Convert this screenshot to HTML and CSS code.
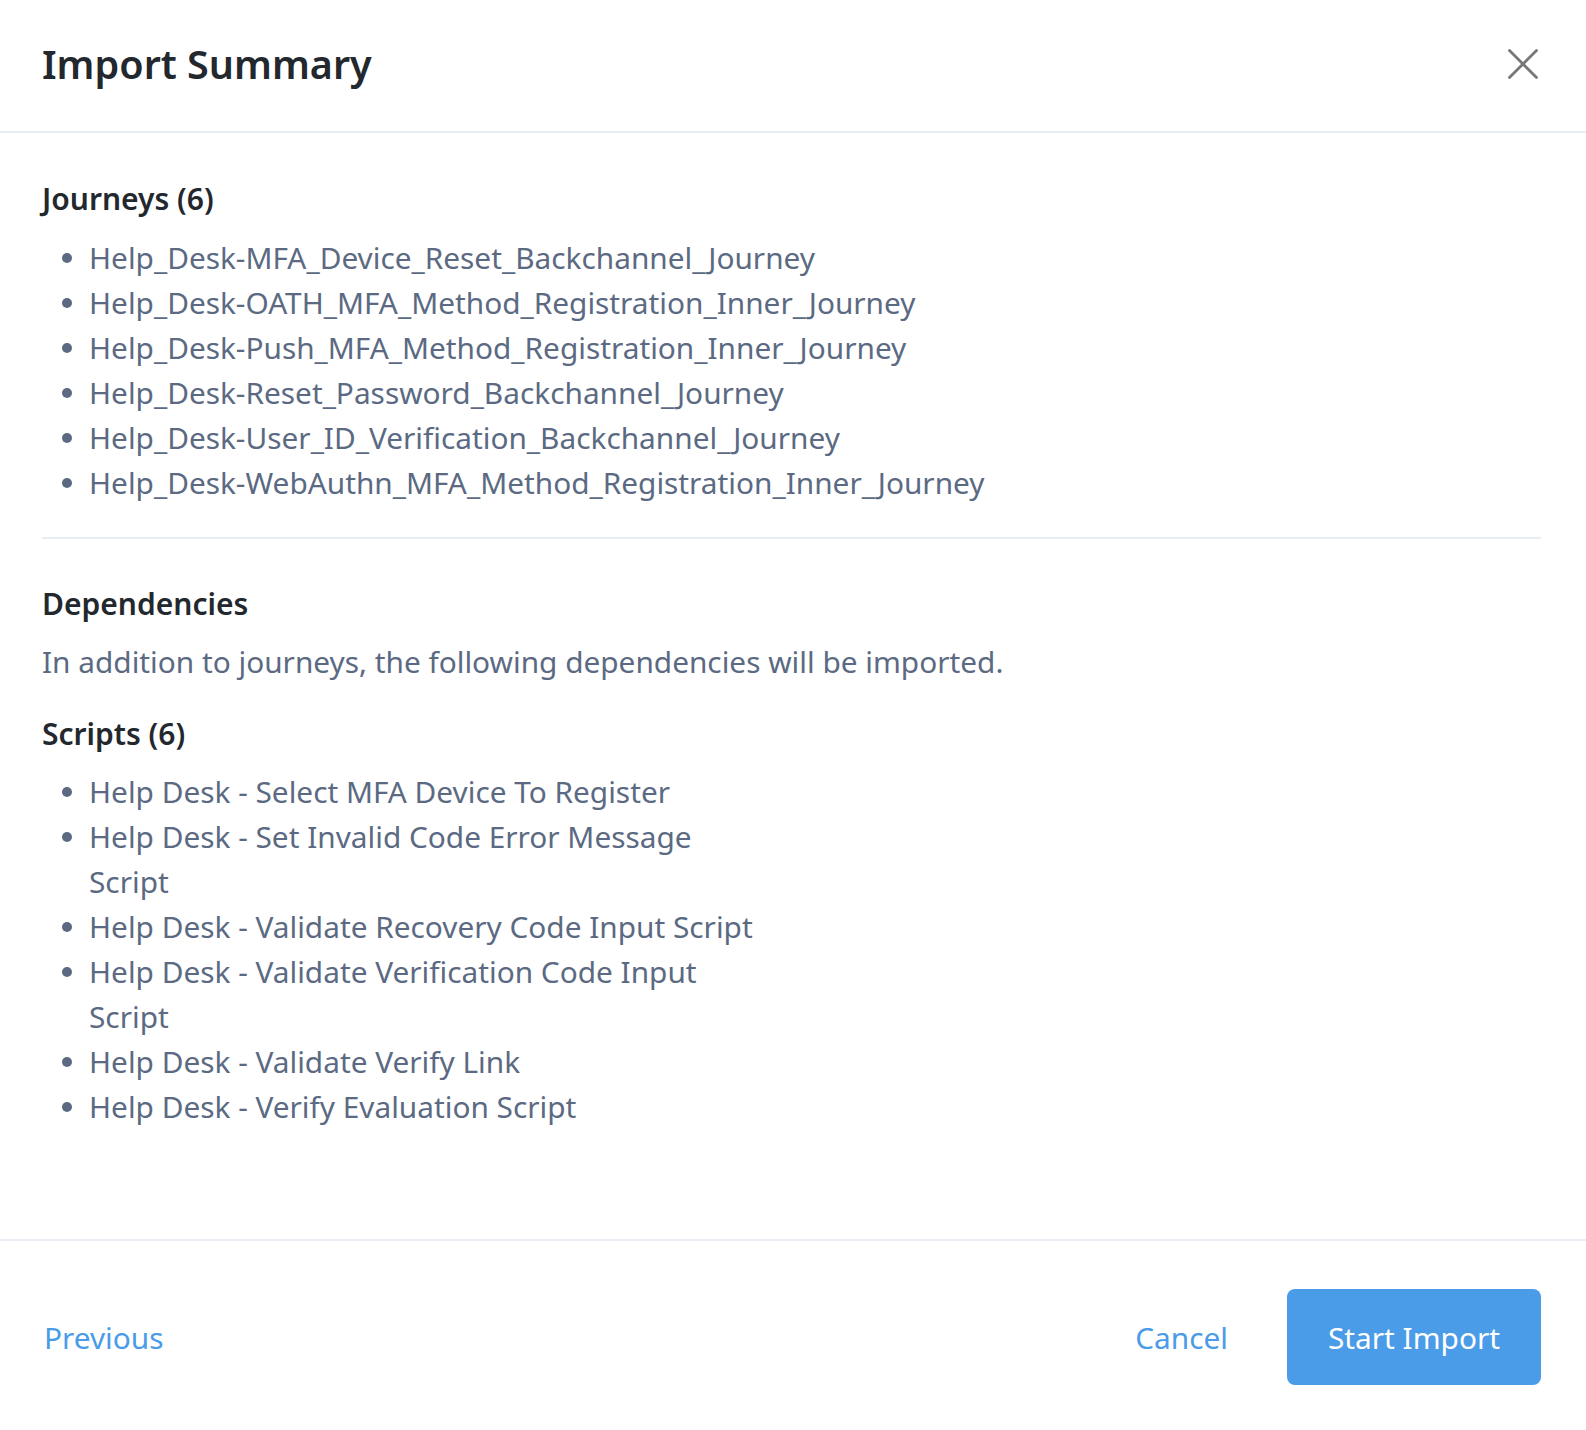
FILE: index.html
```
<!DOCTYPE html>
<html lang="en">
<head>
    <meta charset="UTF-8">
    <meta name="viewport" content="width=device-width, initial-scale=1.0">
    <title>Import Summary</title>
    <link rel="stylesheet" href="styles.css">
</head>
<body>

    <div class="modal">
        <!-- HEADER -->
        <div class="modal-header">
            <h1 class="modal-title">Import Summary</h1>
            <button class="close-button" aria-label="Close">
                <svg width="30" height="30" viewBox="0 0 30 30">
                    <path d="M1.5 1.5 L28.5 28.5 M28.5 1.5 L1.5 28.5" stroke="#777" stroke-width="2.8" stroke-linecap="round" fill="none"/>
                </svg>
            </button>
        </div>

        <!-- BODY -->
        <div class="modal-body">
            <div class="section">
                <h3>Journeys (6)</h3>
                <ul class="item-list">
                    <li>Help_Desk-MFA_Device_Reset_Backchannel_Journey</li>
                    <li>Help_Desk-OATH_MFA_Method_Registration_Inner_Journey</li>
                    <li>Help_Desk-Push_MFA_Method_Registration_Inner_Journey</li>
                    <li>Help_Desk-Reset_Password_Backchannel_Journey</li>
                    <li>Help_Desk-User_ID_Verification_Backchannel_Journey</li>
                    <li>Help_Desk-WebAuthn_MFA_Method_Registration_Inner_Journey</li>
                </ul>
            </div>

            <div class="section deps">
                <h3>Dependencies</h3>
                <p class="hint">In addition to journeys, the following dependencies will be imported.</p>

                <h3 class="sub-title">Scripts (6)</h3>
                <ul class="item-list narrow">
                    <li>Help Desk - Select MFA Device To Register</li>
                    <li>Help Desk - Set Invalid Code Error Message Script</li>
                    <li>Help Desk - Validate Recovery Code Input Script</li>
                    <li>Help Desk - Validate Verification Code Input Script</li>
                    <li>Help Desk - Validate Verify Link</li>
                    <li>Help Desk - Verify Evaluation Script</li>
                </ul>
            </div>
        </div>

        <!-- FOOTER -->
        <div class="modal-footer">
            <button class="link-button previous">Previous</button>
            <div class="footer-right">
                <button class="link-button">Cancel</button>
                <button class="primary-button">Start Import</button>
            </div>
        </div>
    </div>

</body>
</html>
```

FILE: styles.css
```
body {
    font-family: "Noto Sans", "Open Sans", sans-serif;
    margin: 0;
    background-color: #fff;
    color: #5b6a82;
}
.modal {
    width: 100%;
}
.modal-header {
    display: flex;
    justify-content: space-between;
    align-items: center;
    height: 131px;
    padding: 0 48px 0 42px;
    border-bottom: 2px solid #e8edf3;
}
.modal-title {
    margin: 0;
    font-size: 39.5px;
    font-weight: 600;
    color: #23282e;
    margin-top: -3px;
}
.close-button {
    background: none;
    border: none;
    padding: 0;
    width: 30px;
    height: 30px;
    cursor: pointer;
    margin-top: -4px;
}
.close-button svg {
    display: block;
}
.modal-body {
    padding: 48px 45px 110px 42px;
}
.section h3 {
    margin: 0 0 18px;
    font-size: 30px;
    line-height: 36px;
    font-weight: 600;
    color: #23282e;
}
.section.deps {
    border-top: 2px solid #e8edf3;
    margin-top: 32px;
    padding-top: 47px;
}
.section .sub-title {
    margin-bottom: 17px;
}
.hint {
    margin: -1px 0 32px;
    font-size: 29.8px;
    line-height: 45px;
}
.item-list {
    list-style: none;
    margin: 0;
    padding: 0;
    font-size: 29.8px;
    line-height: 45px;
}
.item-list.narrow {
    max-width: 723px;
}
.item-list li {
    display: flex;
}
.item-list li::before {
    content: "";
    flex: none;
    width: 10px;
    height: 10px;
    border-radius: 50%;
    background-color: currentColor;
    margin: 18px 17px 0 20px;
}
.modal-footer {
    display: flex;
    justify-content: space-between;
    align-items: center;
    border-top: 2px solid #e8edf3;
    padding: 48px 45px 44px 42px;
}
.footer-right {
    display: flex;
    align-items: center;
    gap: 18px;
}
.link-button, .primary-button {
    font-family: inherit;
    font-size: 29.8px;
    height: 96px;
    padding: 0 41px;
    border: none;
    border-radius: 8px;
    cursor: pointer;
}
.link-button {
    background: none;
    color: #4a9be8;
}
.link-button.previous {
    padding: 0 2px;
}
.primary-button {
    background-color: #4a9be8;
    color: #fff;
}
.primary-button:hover {
    background-color: #3f8ddb;
}
```
